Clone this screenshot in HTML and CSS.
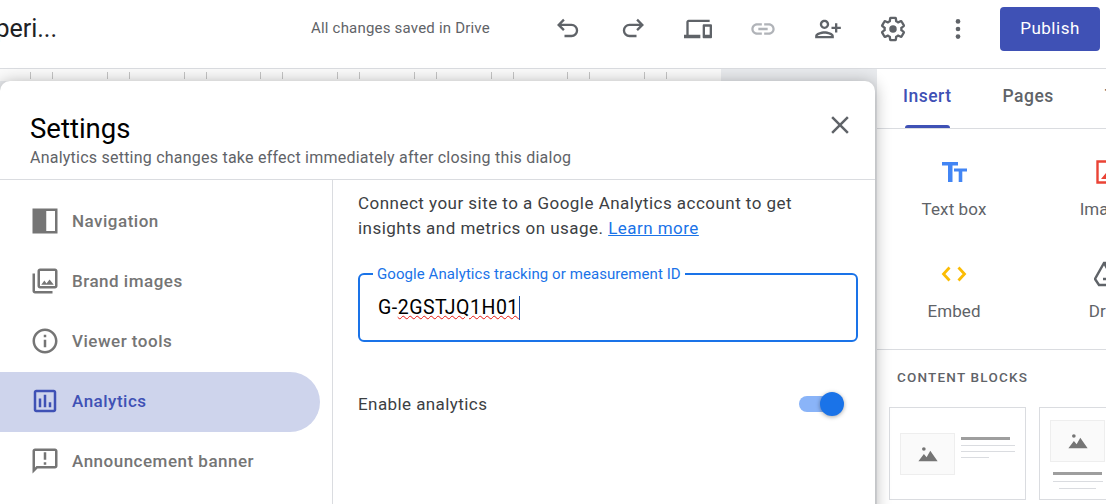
FILE: index.html
```html
<!DOCTYPE html>
<html lang="en">

<head>
  <meta charset="UTF-8" />
  <meta name="viewport" content="width=device-width, initial-scale=1.0" />
  <title>Settings - Analytics</title>
  <link rel="stylesheet" href="styles.css">
</head>

<body>

  <header class="topbar">
    <div class="doc-title"><span>Experi...</span></div>
    <div class="saved">All changes saved in Drive</div>
    <div class="tools">
      <button class="tool"><svg viewBox="0 0 24 24" class="stroke-icon"><path d="M8.500 4 4 8.500 8.500 13M4 8.500h11a4.750 4.750 0 0 1 0 9.500H9" /></svg></button>
      <button class="tool"><svg viewBox="0 0 24 24" class="stroke-icon"><path d="M15.500 4 20 8.500 15.500 13M20 8.500H9a4.750 4.750 0 0 0 0 9.500h6" /></svg></button>
      <button class="tool"><svg viewBox="0 0 24 24"><path d="M4 6h18V4H4c-1.100 0-2 .9-2 2v11H0v3h14v-3H4V6zm19 2h-6c-.55 0-1 .45-1 1v10c0 .55.45 1 1 1h6c.55 0 1-.45 1-1V9c0-.55-.45-1-1-1zm-1 9h-4v-7h4v7z" /></svg></button>
      <button class="tool tool-off"><svg viewBox="0 0 24 24"><path d="M3.900 12c0-1.710 1.390-3.100 3.100-3.100h4V7H7c-2.760 0-5 2.240-5 5s2.240 5 5 5h4v-1.900H7c-1.710 0-3.100-1.390-3.100-3.100zM8 13h8v-2H8v2zm9-6h-4v1.900h4c1.710 0 3.100 1.390 3.100 3.100s-1.390 3.100-3.100 3.100h-4V17h4c2.760 0 5-2.240 5-5s-2.240-5-5-5z" /></svg></button>
      <button class="tool"><svg viewBox="0 0 24 24" class="flip"><path d="M15 12c2.210 0 4-1.790 4-4s-1.790-4-4-4-4 1.790-4 4 1.790 4 4 4zm0-6c1.100 0 2 .9 2 2s-.9 2-2 2-2-.9-2-2 .9-2 2-2zm0 8c-2.670 0-8 1.340-8 4v2h16v-2c0-2.660-5.330-4-8-4zm-6 4c.22-.72 3.310-2 6-2 2.700 0 5.800 1.290 6 2H9zm-3-3v-3h3v-2H6V7H4v3H1v2h3v3h2z" /></svg></button>
      <button class="tool"><svg viewBox="0 0 24 24"><path class="gear" d="M19.140 12.940c.04-.3.06-.61.06-.94 0-.32-.02-.64-.07-.94l2.030-1.580c.18-.14.23-.41.12-.61l-1.920-3.320c-.12-.22-.37-.29-.59-.22l-2.390.96c-.5-.38-1.030-.7-1.620-.94l-.36-2.540c-.04-.24-.24-.41-.48-.41h-3.840c-.24 0-.43.17-.47.41l-.36 2.540c-.59.24-1.130.57-1.620.94l-2.390-.96c-.22-.08-.47 0-.59.22L2.740 8.870c-.12.21-.08.47.12.61l2.030 1.580c-.05.3-.09.63-.09.94s.02.64.07.94l-2.030 1.580c-.18.14-.23.41-.12.61l1.920 3.320c.12.22.37.29.59.22l2.390-.96c.5.38 1.030.7 1.620.94l.36 2.540c.05.24.24.41.48.41h3.840c.24 0 .44-.17.47-.41l.36-2.540c.59-.24 1.130-.56 1.620-.94l2.390.96c.22.08.47 0 .59-.22l1.920-3.320c.12-.22.07-.47-.12-.61l-2.010-1.580z" /><circle cx="12" cy="12" r="3.200" /></svg></button>
      <button class="tool"><svg viewBox="0 0 24 24"><circle cx="12" cy="5.500" r="2" /><circle cx="12" cy="12" r="2" /><circle cx="12" cy="18.500" r="2" /></svg></button>
    </div>
    <button class="publish">Publish</button>
  </header>

  <div class="main">
    <div class="canvas">
      <div class="ruler"></div>

      <div class="dialog">
        <div class="dialog-head">
          <div>
            <h2>Settings</h2>
            <p>Analytics setting changes take effect immediately after closing this dialog</p>
          </div>
          <svg class="close" viewBox="0 0 24 24"><path d="M19 6.410 17.590 5 12 10.590 6.410 5 5 6.410 10.590 12 5 17.590 6.410 19 12 13.410 17.590 19 19 17.590 13.410 12z" /></svg>
        </div>

        <div class="dialog-body">
          <ul class="side">
            <li><svg viewBox="0 0 24 24"><path d="M2 2h20v20H2zM13 4v16h7V4z" fill-rule="evenodd" /></svg>Navigation</li>
            <li><svg viewBox="0 0 24 24"><path d="M20 4v12H8V4h12m0-2H8c-1.100 0-2 .9-2 2v12c0 1.100.9 2 2 2h12c1.100 0 2-.9 2-2V4c0-1.100-.9-2-2-2zm-8.500 9.670l1.690 2.260 2.480-3.100L19 15H9zM2 6v14c0 1.100.9 2 2 2h14v-2H4V6H2z" /></svg>Brand images</li>
            <li><svg viewBox="0 0 24 24"><path d="M11 7h2v2h-2zm0 4h2v6h-2zm1-9C6.480 2 2 6.480 2 12s4.480 10 10 10 10-4.480 10-10S17.520 2 12 2zm0 18c-4.410 0-8-3.590-8-8s3.590-8 8-8 8 3.590 8 8-3.590 8-8 8z" /></svg>Viewer tools</li>
            <li class="active"><svg viewBox="0 0 24 24"><path d="M19 3H5c-1.100 0-2 .9-2 2v14c0 1.100.9 2 2 2h14c1.100 0 2-.9 2-2V5c0-1.100-.9-2-2-2zm0 16H5V5h14v14zM7 10h2v7H7zm4-3h2v10h-2zm4 6h2v4h-2z" /></svg>Analytics</li>
            <li><svg viewBox="0 0 24 24"><path d="M20 2H4c-1.100 0-1.990.9-1.990 2L2 22l4-4h14c1.100 0 2-.9 2-2V4c0-1.100-.9-2-2-2zm0 14H5.170L4 17.170V4h16v12zM11 5h2v6h-2zm0 8h2v2h-2z" /></svg>Announcement banner</li>
          </ul>

          <div class="pane">
            <p class="intro">Connect your site to a Google Analytics account to get insights and metrics on usage. <a href="#">Learn more</a></p>
            <div class="field">
              <label>Google Analytics tracking or measurement ID</label>
              <div class="value">G-<span class="typo">2GSTJQ1H01</span><span class="caret"></span></div>
            </div>
            <div class="toggle-row">
              <span>Enable analytics</span>
              <div class="toggle"><div class="knob"></div></div>
            </div>
          </div>
        </div>
      </div>
    </div>

    <aside class="panel">
      <div class="tabs">
        <div class="tab tab-on">Insert</div>
        <div class="tab">Pages</div>
        <div class="tab">Themes</div>
      </div>

      <div class="inserts">
        <div class="insert">
          <svg viewBox="0 0 28 28"><path fill="#4285f4" d="M2 4h16v3.500h-5.500V24H8V7.500H2z" /><path fill="#4285f4" d="M14 10.500h13v3h-4.700V24h-3.600V13.500H14z" /></svg>
          <span>Text box</span>
        </div>
        <div class="insert">
          <svg viewBox="0 0 28 28"><path fill="none" stroke="#ea4335" stroke-width="2.400" d="M3.500 3.500h21v21h-21z" /><path fill="#ea4335" d="M7 21l5-6 3 3.500 3-4 4 6.500z" /></svg>
          <span>Images</span>
        </div>
        <div class="insert">
          <svg viewBox="0 0 28 28" class="embed"><path d="M9.500 7.500 3.500 14l6 6.500M18.500 7.500l6 6.500-6 6.500" /></svg>
          <span>Embed</span>
        </div>
        <div class="insert">
          <svg viewBox="0 0 28 28" class="drive"><path d="M10 3h8l9 16-4 6H5l-4-6zM10 3l9 16H9" /></svg>
          <span>Drive</span>
        </div>
      </div>

      <div class="blocks">
        <h4>CONTENT BLOCKS</h4>
        <div class="cards">
          <div class="card card-row">
            <div class="thumb"><svg viewBox="0 0 24 24"><circle cx="7.500" cy="6.500" r="2" /><path d="M1.500 20l6-8 3 3.500 4-7 8 11.500z" /></svg></div>
            <div class="lines">
              <i class="line-head"></i>
              <i></i>
              <i></i>
              <i class="line-short"></i>
            </div>
          </div>
          <div class="card card-col">
            <div class="thumb"><svg viewBox="0 0 24 24"><circle cx="7.500" cy="6.500" r="2" /><path d="M1.500 20l6-8 3 3.500 4-7 8 11.500z" /></svg></div>
            <div class="lines lines-center">
              <i class="line-head"></i>
              <i></i>
              <i class="line-short"></i>
            </div>
          </div>
        </div>
      </div>
    </aside>
  </div>

</body>

</html>
```

FILE: styles.css
```css
* {
  margin: 0;
  padding: 0;
  box-sizing: border-box;
  font-family: 'Roboto', sans-serif;
}

body {
  width: 1106px;
  height: 504px;
  overflow: hidden;
  background: white;
  color: #3c4043;
}

button {
  border: none;
  background: none;
}

/* top bar */
.topbar {
  height: 69px;
  display: flex;
  align-items: center;
  padding-right: 6px;
  padding-bottom: 11px;
  border-bottom: 1px solid #dadce0;
}

.doc-title {
  width: 57px;
  display: flex;
  justify-content: flex-end;
  overflow: hidden;
  white-space: nowrap;
  font-family: 'Lato', sans-serif;
  font-size: 25px;
  color: #202124;
}

.saved {
  margin-left: 254px;
  margin-bottom: 2px;
  font-size: 15px;
  letter-spacing: 0.2px;
  color: #5f6368;
}

.tools {
  margin-left: auto;
  display: flex;
}

.tool {
  width: 65px;
  display: flex;
  justify-content: center;
}

.tool svg {
  width: 28px;
  height: 28px;
  fill: #5f6368;
}

.tool svg.stroke-icon {
  fill: none;
  stroke: #5f6368;
  stroke-width: 2;
}

.tool svg .gear {
  fill: none;
  stroke: #5f6368;
  stroke-width: 2;
}

.tool-off svg {
  fill: #b0b3b8;
}

.flip {
  transform: scaleX(-1);
}

.publish {
  width: 100px;
  height: 44px;
  margin-left: 9.5px;
  padding-bottom: 2px;
  border-radius: 4px;
  background: #3f51b5;
  color: white;
  font-size: 17px;
  font-weight: 400;
  letter-spacing: 0.5px;
}

.main {
  display: flex;
  height: 435px;
}

/* editor canvas and settings dialog */
.canvas {
  position: relative;
  width: 877px;
  background: #e8eaed;
}

.ruler {
  width: 721px;
  height: 12px;
  background-color: #fafafa;
  background-image:
    repeating-linear-gradient(to right, transparent 0, transparent 30px, #c4c4c4 30px, #c4c4c4 31px, transparent 31px, transparent 52px, #c4c4c4 52px, #c4c4c4 53px, transparent 53px, transparent 76.75px);
  background-size: 100% 7px;
  background-position: 0 3px;
  background-repeat: no-repeat;
}

.dialog {
  position: absolute;
  top: 12px;
  left: 0;
  width: 875px;
  height: 460px;
  background: white;
  border-radius: 10px;
  box-shadow: 0 2px 16px rgba(0, 0, 0, 0.32);
  z-index: 2;
}

.dialog-head {
  display: flex;
  justify-content: space-between;
  height: 99px;
  padding: 31px 20px 0 30px;
  border-bottom: 1px solid #dadce0;
}

.dialog-head h2 {
  font-size: 27.5px;
  font-weight: 400;
  line-height: 33px;
  color: #000;
}

.dialog-head p {
  margin-top: 2px;
  font-size: 16px;
  line-height: 22px;
  letter-spacing: 0.23px;
  color: #5f6368;
}

.close {
  width: 30px;
  height: 30px;
  margin-top: -2px;
  fill: #5f6368;
}

.dialog-body {
  display: flex;
}

.side {
  width: 333px;
  height: 361px;
  padding-top: 11.5px;
  padding-right: 12px;
  list-style: none;
  border-right: 1px solid #dadce0;
}

.side li {
  display: flex;
  align-items: center;
  gap: 12px;
  height: 60px;
  padding-left: 30px;
  padding-bottom: 1px;
  font-size: 17px;
  font-weight: 500;
  letter-spacing: 0.5px;
  color: #757575;
}

.side li svg {
  width: 30px;
  height: 30px;
  fill: #757575;
}

.side li.active {
  background: #ced4ec;
  border-radius: 0 30px 30px 0;
  color: #3f51b5;
}

.side li.active svg {
  fill: #3f51b5;
}

.pane {
  flex: 1;
  padding: 11px 17px 0 25px;
}

.intro {
  max-width: 480px;
  font-size: 17px;
  line-height: 25px;
  letter-spacing: 0.47px;
}

.intro a {
  color: #1a73e8;
}

.field {
  position: relative;
  height: 69px;
  margin-top: 32px;
  border: 2px solid #1a73e8;
  border-radius: 6px;
  padding: 21px 18px 0;
}

.field label {
  position: absolute;
  top: -10px;
  left: 13px;
  padding: 0 4px;
  background: white;
  font-size: 15px;
  line-height: 18px;
  letter-spacing: 0.07px;
  color: #1a73e8;
}

.value {
  display: flex;
  font-size: 19.5px;
  line-height: 24px;
  letter-spacing: 0.5px;
  color: #000;
}

.typo {
  text-decoration: underline wavy #e8170f 1px;
}

.caret {
  width: 1px;
  height: 24px;
  background: #174ea6;
}

.toggle-row {
  display: flex;
  justify-content: space-between;
  align-items: center;
  height: 24px;
  margin-top: 50px;
  padding-right: 15px;
  font-size: 17px;
  letter-spacing: 0.42px;
}

.toggle {
  position: relative;
  width: 39px;
  height: 16px;
  margin-right: 5px;
  border-radius: 8px;
  background: #8ab4f8;
}

.knob {
  position: absolute;
  top: -4px;
  right: -6px;
  width: 24px;
  height: 24px;
  border-radius: 50%;
  background: #1a73e8;
  box-shadow: 0 1px 4px rgba(0, 0, 0, 0.35);
}

/* right panel */
.panel {
  width: 229px;
  overflow: hidden;
  background: white;
}

.tabs {
  display: flex;
  height: 60px;
  border-bottom: 1px solid #dadce0;
  padding-left: 26px;
  padding-bottom: 5px;
  white-space: nowrap;
}

.tab {
  display: flex;
  align-items: center;
  margin-right: 51px;
  font-size: 17.5px;
  font-weight: 500;
  letter-spacing: 0.5px;
  color: #5f6368;
}

.tab-on {
  position: relative;
  color: #3f51b5;
}

.tab-on::after {
  content: '';
  position: absolute;
  left: 2px;
  right: 2px;
  bottom: -5px;
  height: 3px;
  background: #3f51b5;
  border-radius: 3px 3px 0 0;
}

.inserts {
  display: grid;
  grid-template-columns: 154px 154px;
  row-gap: 41px;
  padding: 29px 0 28px;
  border-bottom: 1px solid #dadce0;
}

.insert {
  display: flex;
  flex-direction: column;
  align-items: center;
  gap: 13px;
  font-size: 17px;
  line-height: 20px;
  letter-spacing: 0.1px;
  color: #5f6368;
}

.insert svg {
  width: 28px;
  height: 28px;
}

.embed {
  fill: none;
  stroke: #fbbc04;
  stroke-width: 2.8;
}

.drive {
  fill: none;
  stroke: #5f6368;
  stroke-width: 2.4;
}

.blocks {
  padding: 19px 0 0 12px;
}

.blocks h4 {
  padding-left: 8px;
  font-size: 13.5px;
  font-weight: 500;
  line-height: 16px;
  letter-spacing: 1.2px;
  color: #5f6368;
}

.cards {
  display: flex;
  gap: 13px;
  margin-top: 22px;
  width: 300px;
}

.card {
  flex: none;
  width: 137px;
  height: 93px;
  border: 1px solid #dadce0;
  display: flex;
  padding: 25px 10px 0;
  gap: 6px;
}

.card-col {
  flex-direction: column;
  padding-top: 12px;
  gap: 10px;
}

.thumb {
  flex: none;
  width: 55px;
  height: 42px;
  display: flex;
  align-items: center;
  justify-content: center;
  background: #fafafa;
  border: 1px solid #eeeeee;
}

.thumb svg {
  width: 22px;
  height: 22px;
  fill: #757575;
}

.lines {
  display: flex;
  flex-direction: column;
  gap: 5px;
  padding-top: 4px;
}

.lines i {
  display: block;
  width: 54px;
  height: 1px;
  background: #dadce0;
}

.lines i.line-head {
  width: 49px;
  height: 3px;
  background: #9e9e9e;
}

.lines i.line-short {
  width: 28px;
}

.lines-center {
  width: 55px;
  padding-top: 0;
  align-items: center;
  gap: 6px;
}

.lines-center i {
  width: 50px;
}

.lines-center i.line-short {
  width: 37px;
}
```
